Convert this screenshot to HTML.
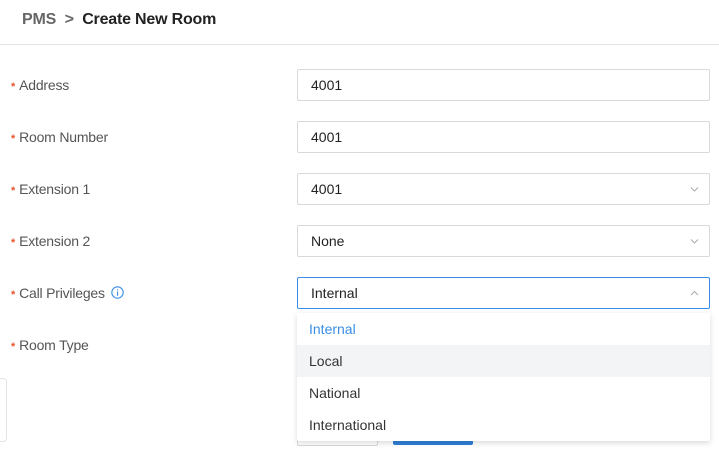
<html><head><style>
body{margin:0;width:719px;height:471px;background:#fff;font-family:"Liberation Sans",sans-serif;position:relative;overflow:hidden}
.hd{position:absolute;left:22px;top:11px;font-size:16px;color:#222;font-weight:bold;letter-spacing:-0.2px}
.hd span{color:#666}
.line{position:absolute;left:0;right:0;top:44px;height:1px;background:#e4e4e4}
.lb{position:absolute;left:11px;font-size:14px;color:#555;letter-spacing:-0.2px}
.lb b{color:#e5542e;font-size:11px;margin-right:4px}
.in{position:absolute;left:297px;height:30px;border:1px solid #d9d9d9;border-radius:2px;font-size:14px;color:#222;line-height:30px;padding-left:13px;width:398px}
.ar{position:absolute;right:10px;top:11px}
.dd{position:absolute;left:297px;top:313px;width:413px;height:128px;background:#fff;box-shadow:0 2px 6px rgba(0,0,0,.15);border-radius:2px;font-size:14px;color:#333}
.dd div{height:32px;line-height:32px;padding-left:12px}
</style></head><body>
<div class="hd"><span>PMS &nbsp;&gt;&nbsp;</span> Create New Room</div>
<div class="line"></div>
<div class="lb" style="top:77px"><b>*</b>Address</div>
<div class="lb" style="top:129px"><b>*</b>Room Number</div>
<div class="lb" style="top:181px"><b>*</b>Extension 1</div>
<div class="lb" style="top:233px"><b>*</b>Extension 2</div>
<div class="lb" style="top:285px"><b>*</b>Call Privileges <svg width="13" height="13" viewBox="0 0 13 13" style="vertical-align:-1px;margin-left:3px"><circle cx="6.5" cy="6.5" r="5.7" fill="none" stroke="#3a8ee6" stroke-width="1.1"/><rect x="6" y="5.5" width="1.1" height="4.3" fill="#3a8ee6"/><rect x="6" y="3.2" width="1.1" height="1.2" fill="#3a8ee6"/></svg></div>
<div class="lb" style="top:337px"><b>*</b>Room Type</div>
<div class="in" style="top:69px">4001</div>
<div class="in" style="top:121px">4001</div>
<div class="in" style="top:173px">4001<svg class="ar" width="9" height="8" viewBox="0 0 9 8"><path d="M1 2.5L4.5 6L8 2.5" fill="none" stroke="#aaa" stroke-width="1"/></svg></div>
<div class="in" style="top:225px">None<svg class="ar" width="9" height="8" viewBox="0 0 9 8"><path d="M1 2.5L4.5 6L8 2.5" fill="none" stroke="#aaa" stroke-width="1"/></svg></div>
<div class="in" style="top:277px;border-color:#3a8ee6">Internal<svg class="ar" width="9" height="8" viewBox="0 0 9 8"><path d="M1 6L4.5 2.5L8 6" fill="none" stroke="#aaa" stroke-width="1"/></svg></div>
<div style="position:absolute;left:297px;top:420px;width:79px;height:24px;border:1px solid #d9d9d9;border-radius:2px"></div>
<div style="position:absolute;left:393px;top:420px;width:80px;height:25px;background:#2f7fd9;border-radius:2px"></div>
<div style="position:absolute;left:-6px;top:378px;width:11px;height:62px;border:1px solid #e4e4e4;border-radius:4px"></div>
<div class="dd">
<div style="color:#3a8ee6">Internal</div>
<div style="background:#f3f4f5">Local</div>
<div>National</div>
<div>International</div>
</div>
</body></html>
